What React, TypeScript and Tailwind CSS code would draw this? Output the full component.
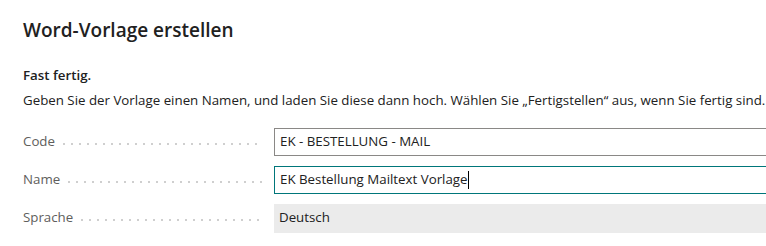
import React from "react";

const dots =
  "flex-1 h-[2px] mx-[8px] bg-[linear-gradient(to_right,#cfcfcf_2px,transparent_2px)] bg-[length:8px_2px] bg-repeat-x";

function Row({ label, children }: { label: string; children: React.ReactNode }) {
  return (
    <div className="flex items-center h-[28px]">
      <div className="flex items-center w-[251px] pr-[4px]">
        <span className="text-[#605e5c]">{label}</span>
        <div className={dots + " mt-[3px]"} />
      </div>
      {children}
    </div>
  );
}

export default function App() {
  return (
    <div
      className="w-[766px] h-[246px] overflow-hidden bg-white text-[13.3px] text-[#212121]"
      style={{ fontFamily: '"Segoe UI", "Open Sans", sans-serif' }}
    >
      <div className="pl-[23px] pt-[17px]">
        <h1 className="text-[19px] leading-[26px] font-semibold text-[#212121]">Word-Vorlage erstellen</h1>
        <div className="mt-[23px] font-semibold leading-[18px]">Fast fertig.</div>
        <div className="leading-[18px] mt-[7px] whitespace-nowrap">
          Geben Sie der Vorlage einen Namen, und laden Sie diese dann hoch. Wählen Sie „Fertigstellen“ aus, wenn Sie fertig sind.
        </div>
        <div className="mt-[19px] flex flex-col gap-[10px]">
          <Row label="Code">
            <div className="flex-1 -mr-[10px] h-[28px] border border-[#8a8886] flex items-center pl-[5px]">
              EK - BESTELLUNG - MAIL
            </div>
          </Row>
          <Row label="Name">
            <div className="flex-1 -mr-[10px] h-[28px] border-[1.5px] border-[#00767a] flex items-center pl-[5px]">
              <span>EK Bestellung Mailtext Vorlage</span>
              <span className="inline-block w-[1px] h-[18px] bg-black" />
            </div>
          </Row>
          <Row label="Sprache">
            <div className="flex-1 -mr-[10px] h-[29px] bg-[#ebebeb] flex items-center pl-[5px]">
              Deutsch
            </div>
          </Row>
        </div>
      </div>
    </div>
  );
}
